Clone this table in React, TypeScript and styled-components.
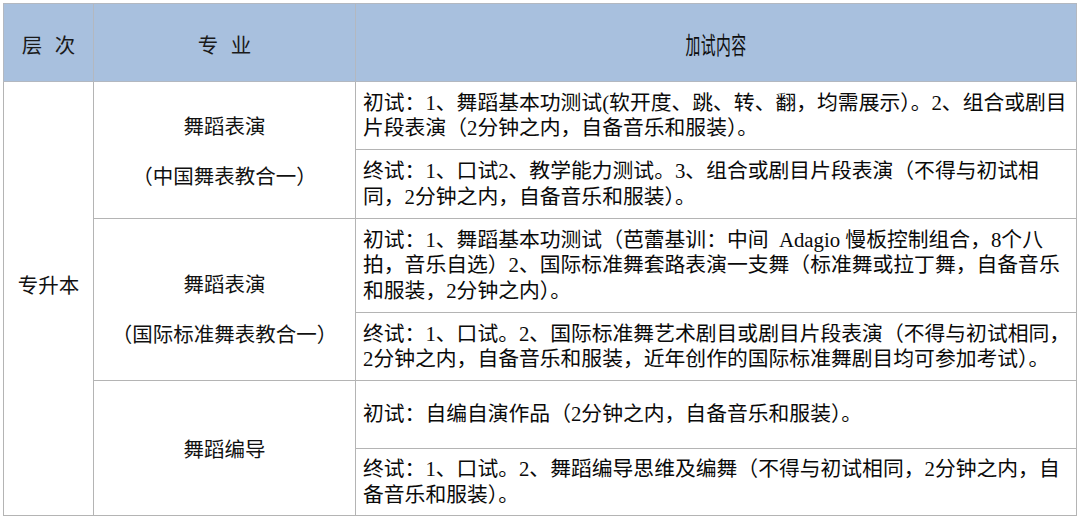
import React from "react";
import styled, { createGlobalStyle } from "styled-components";

const Global = createGlobalStyle`
  html, body { margin: 0; padding: 0; background: #ffffff; }
  body { font-family: "Noto Sans CJK SC", "Noto Sans", sans-serif; }
`;

const Page = styled.div`
  width: 1080px;
  height: 520px;
  padding: 3px 0 0 3px;
  box-sizing: border-box;
  background: #ffffff;
`;

const Table = styled.table`
  border-collapse: collapse;
  width: 1074px;
  table-layout: fixed;
`;

const HeadCell = styled.th<{ $w?: number }>`
  ${(p) => (p.$w ? `width: ${p.$w}px;` : "")}
  height: 75px;
  background: #a8c0de;
  border: 1px solid #b3b8c0;
  color: #1a1a1a;
  font-family: "Noto Sans CJK SC", sans-serif;
  font-weight: 400;
  font-size: 20.5px;
  text-align: center;
  vertical-align: middle;
  padding: 2px 0 0;
  word-spacing: 8px;
`;

const Narrow = styled.span`
  display: inline-block;
  font-size: 24px;
  transform: scaleX(0.62);
  letter-spacing: 0.5px;
  color: #0e0e0e;
`;

const Row = styled.tr<{ $h: number }>`
  height: ${(p) => p.$h}px;
`;

const LevelCell = styled.td`
  border: 1px solid #b4b4b4;
  text-align: center;
  vertical-align: middle;
  font-family: "Noto Sans CJK SC", sans-serif;
  font-size: 20.5px;
  color: #111111;
  padding: 0 0 30px;
`;

const MajorCell = styled.td<{ $shift?: number }>`
  border: 1px solid #b4b4b4;
  text-align: center;
  vertical-align: middle;
  font-family: "Noto Sans CJK SC", sans-serif;
  font-size: 20.5px;
  color: #111111;
  line-height: 50px;
  padding: ${(p) => p.$shift ?? 0}px 0 0;
`;

const ContentCell = styled.td`
  border: 1px solid #b4b4b4;
  vertical-align: middle;
  font-family: "Liberation Serif", "Noto Sans CJK SC", serif;
  font-size: 20.8px;
  line-height: 25.5px;
  color: #0a0a0a;
  padding: 0 0 1px 7px;
  white-space: pre;
`;

const Line = styled.div``;

type Sub = { h: number; lines: string[] };
type Group = { major: string[]; shift?: number; subs: Sub[] };

const groups: Group[] = [
  {
    major: ["舞蹈表演", "（中国舞表教合一）"],
    subs: [
      {
        h: 68,
        lines: [
          "初试：1、舞蹈基本功测试(软开度、跳、转、翻，均需展示）。2、组合或剧目",
          "片段表演（2分钟之内，自备音乐和服装）。",
        ],
      },
      {
        h: 69,
        lines: [
          "终试：1、口试2、教学能力测试。3、组合或剧目片段表演（不得与初试相",
          "同，2分钟之内，自备音乐和服装）。",
        ],
      },
    ],
  },
  {
    major: ["舞蹈表演", "（国际标准舞表教合一）"],
    shift: 16,
    subs: [
      {
        h: 94,
        lines: [
          "初试：1、舞蹈基本功测试（芭蕾基训：中间  Adagio 慢板控制组合，8个八",
          "拍，音乐自选）2、国际标准舞套路表演一支舞（标准舞或拉丁舞，自备音乐",
          "和服装，2分钟之内）。",
        ],
      },
      {
        h: 68,
        lines: [
          "终试：1、口试。2、国际标准舞艺术剧目或剧目片段表演（不得与初试相同，",
          "2分钟之内，自备音乐和服装，近年创作的国际标准舞剧目均可参加考试）。",
        ],
      },
    ],
  },
  {
    major: ["舞蹈编导"],
    subs: [
      {
        h: 68,
        lines: ["初试：自编自演作品（2分钟之内，自备音乐和服装）。"],
      },
      {
        h: 67,
        lines: [
          "终试：1、口试。2、舞蹈编导思维及编舞（不得与初试相同，2分钟之内，自",
          "备音乐和服装）。",
        ],
      },
    ],
  },
];

const totalRows = groups.reduce((n, g) => n + g.subs.length, 0);

export default function App() {
  return (
    <Page>
      <Global />
      <Table>
        <thead>
          <tr>
            <HeadCell $w={89}>层 次</HeadCell>
            <HeadCell $w={261}>专 业</HeadCell>
            <HeadCell>
              <Narrow>加试内容</Narrow>
            </HeadCell>
          </tr>
        </thead>
        <tbody>
          {groups.map((g, gi) =>
            g.subs.map((s, si) => (
              <Row key={`${gi}-${si}`} $h={s.h}>
                {gi === 0 && si === 0 && (
                  <LevelCell rowSpan={totalRows}>专升本</LevelCell>
                )}
                {si === 0 && (
                  <MajorCell rowSpan={g.subs.length} $shift={g.shift}>
                    {g.major.map((m) => (
                      <Line key={m}>{m}</Line>
                    ))}
                  </MajorCell>
                )}
                <ContentCell>
                  {s.lines.map((l) => (
                    <Line key={l}>{l}</Line>
                  ))}
                </ContentCell>
              </Row>
            ))
          )}
        </tbody>
      </Table>
    </Page>
  );
}
